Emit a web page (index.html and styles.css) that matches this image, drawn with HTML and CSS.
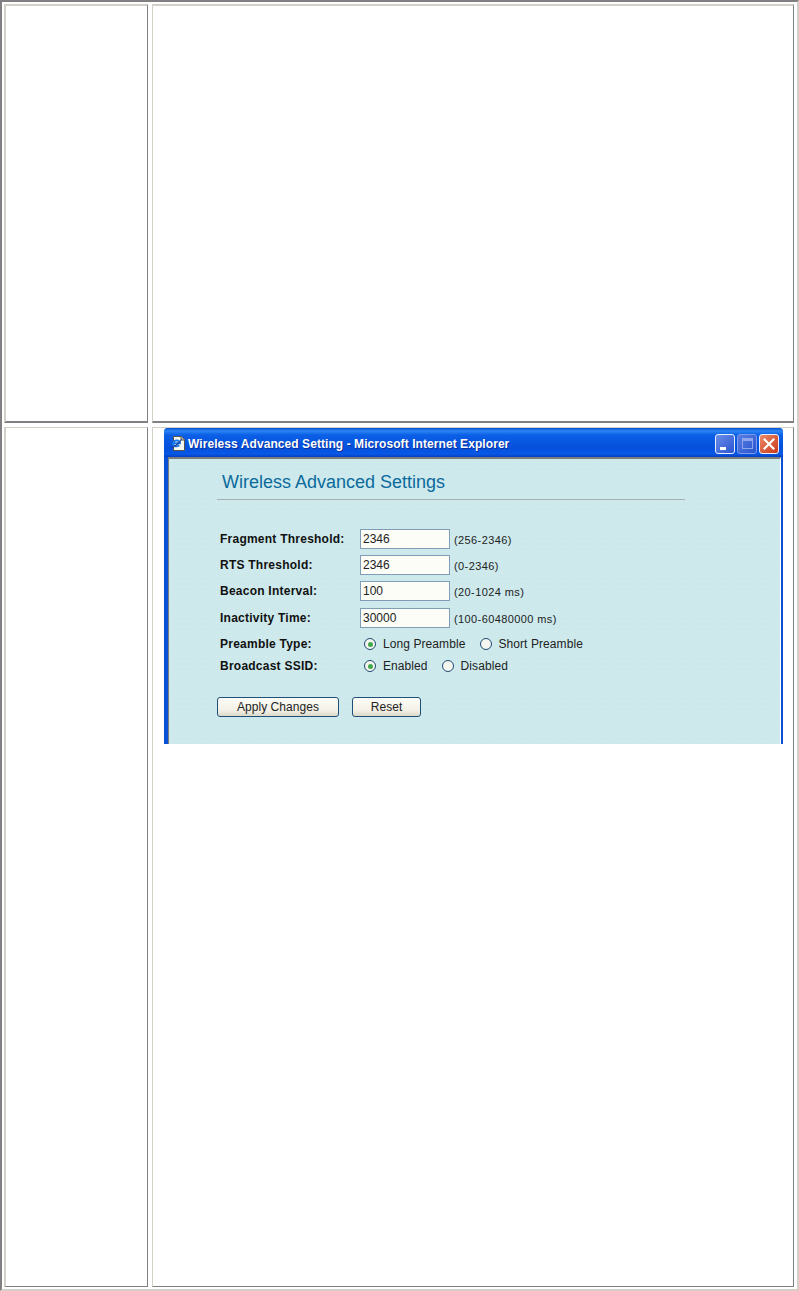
FILE: index.html
```html
<!DOCTYPE html>
<html lang="en">
<head>
<meta charset="utf-8">
<title>Wireless Advanced Settings</title>
<link rel="stylesheet" href="styles.css">
</head>
<body>
<div class="frame">
  <div class="cell cell-a"></div>
  <div class="cell cell-b"></div>
  <div class="cell cell-c"></div>
  <div class="cell cell-d">
    <div class="window">
      <div class="titlebar">
        <svg class="ie-icon" width="17" height="17" viewBox="0 0 17 17">
          <path d="M4.500 1.500h8l3 3v11h-11z" fill="#f6f6ee" stroke="#55554e" stroke-width="1"/>
          <path d="M12 1.500v3.500h3.500" fill="#c9c9c0" stroke="#55554e" stroke-width="1"/>
          <path d="M3.800 8.200h7.200c0-3-5-3.800-6.600-.8-1.300 2.800 1.700 5.400 6 3" fill="none" stroke="#1c78ea" stroke-width="1.900"/>
          <path d="M.5 12.500C3.500 12.800 10 7.500 13 3.200 12 8.500 4.500 14.200.5 12.500z" fill="#14409a"/>
        </svg>
        <span class="title-text">Wireless Advanced Setting - Microsoft Internet Explorer</span>
        <div class="controls">
          <div class="ctl ctl-min"><span class="min-bar"></span></div>
          <div class="ctl ctl-max"><span class="max-box"></span></div>
          <div class="ctl ctl-close">
            <svg width="12" height="12" viewBox="0 0 12 12"><path d="M.8 .8l10.400 10.400M11.200 .8L.8 11.200" stroke="#fff" stroke-width="2.200"/></svg>
          </div>
        </div>
      </div>
      <div class="client">
        <h1 class="page-title">Wireless Advanced Settings</h1>
        <div class="rule"></div>
        <div class="form">
          <div class="field f1"><span class="label">Fragment Threshold:</span><span class="input">2346</span><span class="hint">(256-2346)</span></div>
          <div class="field f2"><span class="label">RTS Threshold:</span><span class="input">2346</span><span class="hint">(0-2346)</span></div>
          <div class="field f3"><span class="label">Beacon Interval:</span><span class="input">100</span><span class="hint">(20-1024 ms)</span></div>
          <div class="field f4"><span class="label">Inactivity Time:</span><span class="input">30000</span><span class="hint">(100-60480000 ms)</span></div>
          <div class="choice c1">
            <span class="label">Preamble Type:</span>
            <span class="radio on"></span><span class="opt opt-long">Long Preamble</span>
            <span class="radio"></span><span class="opt opt-short">Short Preamble</span>
          </div>
          <div class="choice c2">
            <span class="label">Broadcast SSID:</span>
            <span class="radio on"></span><span class="opt opt-en">Enabled</span>
            <span class="radio"></span><span class="opt">Disabled</span>
          </div>
        </div>
        <div class="buttons">
          <span class="btn btn-apply">Apply Changes</span>
          <span class="btn btn-reset">Reset</span>
        </div>
      </div>
    </div>
  </div>
</div>
</body>
</html>
```
FILE: styles.css
```css
html, body {
  margin: 0;
  padding: 0;
  background: #fff;
}
.frame {
  box-sizing: border-box;
  width: 799px;
  height: 1291px;
  padding: 2px;
  border: 2px solid;
  border-color: #808080 #d4d0c8 #d4d0c8 #808080;
  display: grid;
  grid-template-columns: 144px 642px;
  grid-template-rows: 419px 860px;
  column-gap: 4px;
  row-gap: 4px;
}
.cell {
  box-sizing: border-box;
  border-style: solid;
  border-color: #d4d0c8 #808080 #808080 #d4d0c8;
  border-width: 2px 1px 2px 2px;
}
.cell-b, .cell-d { border-left-width: 1px; }
.cell-c, .cell-d { border-top-width: 1px; border-bottom-width: 1px; }
.window {
  width: 619px;
  height: 316px;
  margin-left: 11px;
  background: #0a4fd8;
  border-radius: 4px 4px 0 0;
  font-family: "Liberation Sans", Arial, sans-serif;
  color: #222;
  overflow: hidden;
}
.titlebar {
  box-sizing: border-box;
  height: 29px;
  display: flex;
  align-items: center;
  padding: 2px 4px 0 5px;
  background: linear-gradient(#0a50d4 0, #2a86f4 3px, #0b5fe6 7px, #0450dc 20px, #0858e6 26px, #0440c0 29px);
}
.ie-icon { flex: none; }
.title-text {
  margin-left: 2px;
  font-size: 12px;
  font-weight: bold;
  letter-spacing: 0.07px;
  color: #fff;
  text-shadow: 1px 1px 0 #0a2f9a;
  white-space: nowrap;
}
.controls {
  margin-left: auto;
  display: flex;
  gap: 2px;
}
.ctl {
  box-sizing: border-box;
  width: 20px;
  height: 20px;
  border: 1px solid #e8eefc;
  border-radius: 3px;
  display: flex;
  align-items: center;
  justify-content: center;
  position: relative;
}
.ctl-min { background: linear-gradient(135deg, #6c8ee8, #2a55d2); }
.ctl-max { background: linear-gradient(135deg, #5a7de0, #2a55d2); border-color: #7f9ae8; }
.ctl-close { background: linear-gradient(135deg, #ec8a66, #c9391a); }
.min-bar {
  width: 6px;
  height: 3px;
  background: #fff;
  position: absolute;
  left: 4px;
  bottom: 3px;
}
.max-box {
  box-sizing: border-box;
  width: 11px;
  height: 11px;
  border: 1px solid #8ea6ec;
  border-top-width: 3px;
}
.client {
  box-sizing: border-box;
  height: 287px;
  margin-left: 4px;
  width: 613px;
  border-top: 2px solid #7d7d7d;
  border-left: 1px solid #7d7d7d;
  border-right: 1px solid #fff;
  background-color: #cde9ec;
  background-image: radial-gradient(circle, #d6eef0 0.5px, transparent 0.7px);
  background-size: 5px 5px;
  padding: 11px 0 0 48px;
}
.page-title {
  margin: 0 0 0 5px;
  font-size: 18px;
  line-height: 24px;
  font-weight: normal;
  color: #0b6a9c;
}
.rule {
  width: 468px;
  height: 1px;
  margin-top: 5px;
  background: #a6b0b0;
}
.form {
  margin: 29px 0 0 3px;
  display: flex;
  flex-direction: column;
}
.field {
  display: flex;
  align-items: center;
  height: 20px;
  margin-bottom: 6px;
}
.f4 { margin-top: 1px; margin-bottom: 5px; }
.label {
  width: 140px;
  flex: none;
  font-size: 12px;
  font-weight: bold;
  letter-spacing: 0.24px;
  color: #111;
}
.input {
  box-sizing: border-box;
  width: 90px;
  height: 20px;
  flex: none;
  border: 1px solid #7f9db9;
  background: #fbfdf6;
  font-size: 12px;
  line-height: 18px;
  padding-left: 2px;
}
.hint {
  margin-left: 4px;
  font-size: 11px;
  letter-spacing: 0.4px;
  position: relative;
  top: 1px;
}
.choice {
  display: flex;
  align-items: center;
  height: 22px;
}
.radio {
  box-sizing: border-box;
  width: 12px;
  height: 12px;
  flex: none;
  border: 1px solid #1f4a74;
  border-radius: 50%;
  margin-left: 4px;
  background: #f6f6f0;
  display: flex;
  align-items: center;
  justify-content: center;
}
.radio.on::after {
  content: "";
  width: 5px;
  height: 5px;
  border-radius: 50%;
  background: #3fa84a;
}
.opt {
  margin-left: 7px;
  font-size: 12px;
  letter-spacing: 0.08px;
}
.opt-long { margin-right: 11px; }
.opt-short { margin-left: 6px; }
.opt-en { margin-right: 10px; }
.buttons {
  display: flex;
  gap: 13px;
  margin-top: 20px;
}
.btn {
  box-sizing: border-box;
  height: 20px;
  border: 1px solid #1d4f78;
  border-radius: 3px;
  background: linear-gradient(#fdfdf8, #f2f0e6 70%, #dcd8c8);
  font-size: 12px;
  line-height: 18px;
  text-align: center;
  letter-spacing: 0.05px;
}
.btn-apply { width: 122px; }
.btn-reset { width: 69px; }
```
